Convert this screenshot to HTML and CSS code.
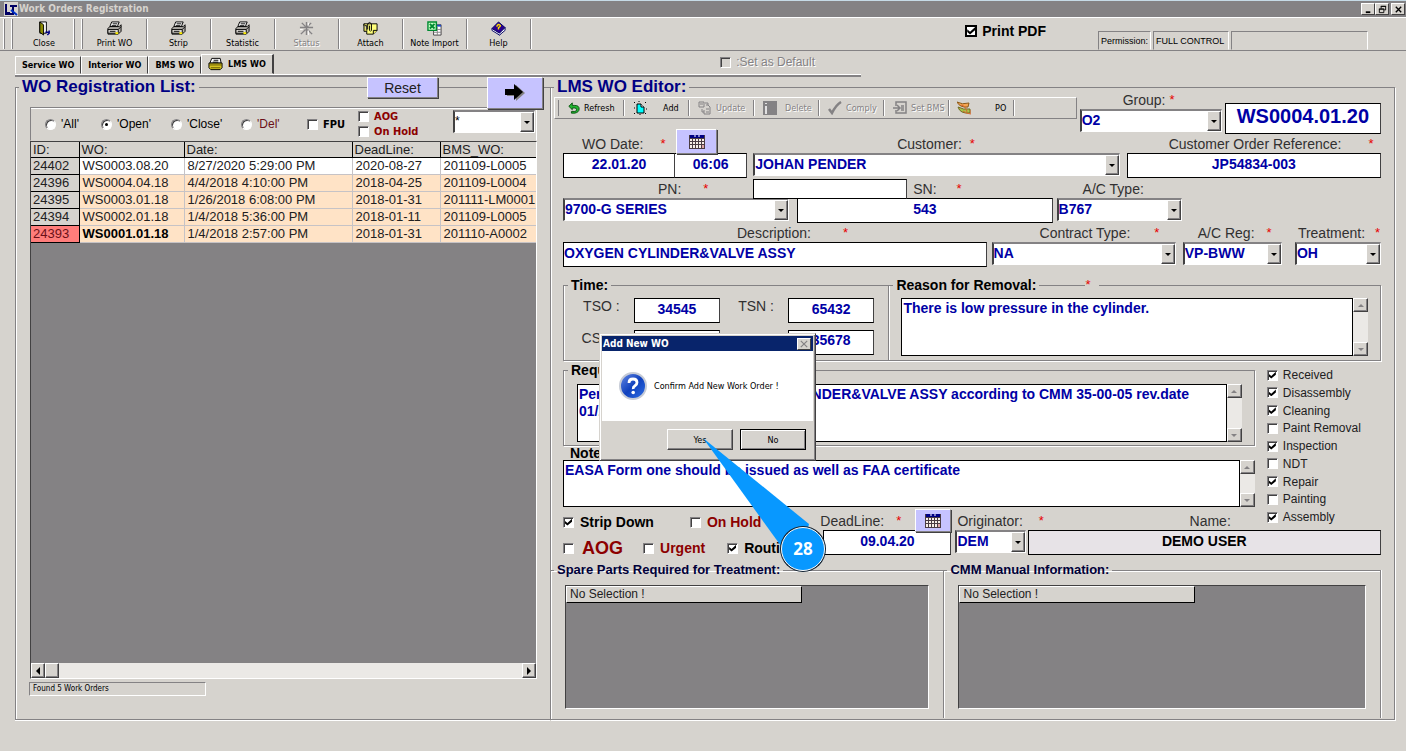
FILE: index.html
```html
<!DOCTYPE html>
<html lang="en">
<head>
<meta charset="utf-8">
<title>Work Orders Registration</title>
<link rel="stylesheet" href="styles.css">
</head>
<body>
<svg width="0" height="0" class="defs" aria-hidden="true">
  <symbol id="printer" viewBox="0 0 16 16"><path d="M5 1h8l-2 5H3z" fill="#fff" stroke="#000"/><path d="M6 3h5M5 5h5" stroke="#000"/><path d="M1 8l2-2h10l2-2v7l-3 3H1z" fill="#b5b2ad" stroke="#000"/><path d="M1 9h11v4H1z" fill="#dedbd6" stroke="#000"/><path d="M3 11h6" stroke="#000"/><path d="M9 12h3v2H9z" fill="#ffef00"/><path d="M12 9l3-3" stroke="#000"/></symbol>
  <symbol id="calendar" viewBox="0 0 16 14"><path d="M0 0h16v14H0z" fill="#4a3c42"/><path d="M1 0h14v3H1z" fill="#000084"/><path d="M5 1h2M9 1h2" stroke="#fff"/><path d="M1 4h2v2H1zM4 4h2v2H4zM7 4h2v2H7zM10 4h2v2h-2zM13 4h2v2h-2zM1 7h2v2H1zM4 7h2v2H4zM7 7h2v2H7zM10 7h2v2h-2zM13 7h2v2h-2zM1 10h2v3H1zM4 10h2v3H4zM7 10h2v3H7zM10 10h2v3h-2z" fill="#f7efe7"/><path d="M13 10h2v3h-2z" fill="#dea5a5"/></symbol>
</svg>

<header class="titlebar">
  <svg class="app-icon" viewBox="0 0 14 14"><path d="M0 0h14v14H0z" fill="#d6d3ce"/><path d="M2 2v9h4M9 3v10M6 4h7M1 12h7" stroke="#000063" stroke-width="2" fill="none"/><path d="M7 8l6 5" stroke="#0030c6" stroke-width="2"/></svg>
  <h1>Work Orders Registration</h1>
  <div class="window-buttons">
    <button aria-label="Minimize"><svg viewBox="0 0 10 10"><path d="M2 8h5" stroke="#000" stroke-width="2"/></svg></button>
    <button aria-label="Restore"><svg viewBox="0 0 10 10"><path d="M3.500 4V1.500h5v4H7M3 1.500h6M1.500 4.500h5v4h-5zM1 4.500h6" fill="none" stroke="#000"/></svg></button>
    <button class="apart" aria-label="Close window"><svg viewBox="0 0 10 10"><path d="M2 2l6 6M8 2L2 8" stroke="#000" stroke-width="1.500"/></svg></button>
  </div>
</header>

<nav class="toolbar">
  <i class="grip"></i><i class="grip"></i>
  <button class="tool close"><svg viewBox="0 0 16 16"><path d="M3 1h7v12H3z" fill="#fff" stroke="#000"/><path d="M3 1l4 3v11l-4-3z" fill="#8c8a00" stroke="#000"/><path d="M9 12h4M13 10v3l-2 2" stroke="#000084" stroke-width="1.500" fill="none"/></svg>Close</button>
  <i class="grip"></i><i class="grip last"></i>
  <button class="tool"><svg><use href="#printer"/></svg>Print WO</button>
  <button class="tool"><svg><use href="#printer"/></svg>Strip</button>
  <button class="tool"><svg><use href="#printer"/></svg>Statistic</button>
  <button class="tool" disabled><svg viewBox="0 0 16 16"><path d="M8 1v14M1 7h14M3 2l4 4M13 2L9 6M2 14l5-5M14 14L9 9" stroke="#848284" stroke-width="1.500" fill="none"/><path d="M10 2v3M4 9H1M10 10v5" stroke="#fff"/></svg>Status</button>
  <button class="tool"><svg viewBox="0 0 16 16"><path d="M1 3h14v7l-4 4H4V5H1z" fill="#ffff7b" stroke="#000"/><path d="M11 14v-4h4M1 3v8h3" fill="#e7e35a" stroke="#000"/><path d="M5 9V3q2-3 4 0v7q-1 2-2 0V5" fill="none" stroke="#000"/></svg>Attach</button>
  <button class="tool"><svg viewBox="0 0 16 16"><path d="M7 4h8v11H7z" fill="#fff" stroke="#424142"/><path d="M7 4h8v2H7z" fill="#2149c6"/><path d="M7 9h8M7 12h8M11 6v9" stroke="#848284"/><path d="M1 1h9v9H1z" fill="#c6ffc6" stroke="#008a31" stroke-width="1.500"/><path d="M3 3l5 5M8 3L3 8" stroke="#008a31" stroke-width="2"/></svg>Note Import</button>
  <button class="tool"><svg viewBox="0 0 16 16"><path d="M1 8l7-7 7 6-6 8z" fill="#29008c" stroke="#000063"/><path d="M15 7v3l-6 5-8-5V8l8 5z" fill="#fff" stroke="#000063"/><path d="M6 6q2-4 4-1 0 1-2 2v2" stroke="#ffde00" stroke-width="1.500" fill="none"/></svg>Help</button>
  <label class="print-pdf"><input type="checkbox" class="check heavy" checked>Print PDF</label>
  <div class="permission"><span>Permission:</span><span>FULL CONTROL</span><span></span></div>
</nav>

<div class="tab-strip">
  <div class="tabs" role="tablist">
    <button role="tab">Service WO</button><button role="tab">Interior WO</button><button role="tab">BMS WO</button><button role="tab" class="active" aria-selected="true"><svg viewBox="0 0 16 14"><path d="M4 1h9l1 5H2z" fill="#fff" stroke="#000"/><path d="M6 3h5M5 5h6" stroke="#000"/><path d="M1 6h14v5l-2 2H3l-2-2z" fill="#d6c321" stroke="#000"/><path d="M1 8h14M3 11h10" stroke="#635900"/></svg>LMS WO</button>
  </div>
  <label class="set-default"><input type="checkbox" class="check" disabled>:Set as Default</label>
</div>

<main class="main">
  <fieldset class="panel list-panel">
    <legend>WO Registration List:</legend>
    <button class="lav reset">Reset</button>
    <button class="lav go" aria-label="Go to editor"><svg viewBox="0 0 22 20"><path d="M3 7h9V2l9 8-9 8v-5H3z" fill="#848284"/><path d="M1 6h9V1l9 8-9 8v-5H1z" fill="#000"/></svg></button>
    <div class="filters">
      <label><input type="radio" name="state" class="radio">'All'</label>
      <label><input type="radio" name="state" class="radio" checked>'Open'</label>
      <label><input type="radio" name="state" class="radio">'Close'</label>
      <label class="maroon"><input type="radio" name="state" class="radio">'Del'</label>
      <label class="strong fpu"><input type="checkbox" class="check">FPU</label>
      <div class="flags">
        <label class="strong red"><input type="checkbox" class="check">AOG</label>
        <label class="strong red"><input type="checkbox" class="check">On Hold</label>
      </div>
      <div class="combo wild"><select aria-label="Mask"><option>*</option></select><i></i></div>
    </div>
    <div class="listing">
      <table>
        <thead><tr><th class="c-id">ID:</th><th class="c-wo">WO:</th><th class="c-date">Date:</th><th class="c-dead">DeadLine:</th><th>BMS_WO:</th></tr></thead>
        <tbody>
          <tr class="plain"><th>24402</th><td>WS0003.08.20</td><td>8/27/2020 5:29:00 PM</td><td>2020-08-27</td><td>201109-L0005</td></tr>
          <tr><th>24396</th><td>WS0004.04.18</td><td>4/4/2018 4:10:00 PM</td><td>2018-04-25</td><td>201109-L0004</td></tr>
          <tr><th>24395</th><td>WS0003.01.18</td><td>1/26/2018 6:08:00 PM</td><td>2018-01-31</td><td>201111-LM0001</td></tr>
          <tr><th>24394</th><td>WS0002.01.18</td><td>1/4/2018 5:36:00 PM</td><td>2018-01-11</td><td>201109-L0005</td></tr>
          <tr class="current"><th>24393</th><td>WS0001.01.18</td><td>1/4/2018 2:57:00 PM</td><td>2018-01-31</td><td>201110-A0002</td></tr>
        </tbody>
      </table>
      <div class="hscroll"><button class="left" aria-label="Scroll left"></button><span class="thumb"></span><button class="right" aria-label="Scroll right"></button></div>
    </div>
    <div class="found">Found 5 Work Orders</div>
  </fieldset>

  <fieldset class="panel editor">
    <legend>LMS WO Editor:</legend>
    <div class="head">
      <div class="actions">
        <button><svg viewBox="0 0 14 14"><path d="M1 5l4-4v3h3q5 0 5 4t-5 5H4v-2h4q2 0 2-2T8 7H5v2z" fill="#21b531" stroke="#004a08"/></svg>Refresh</button>
        <button class="wide"><svg viewBox="0 0 14 14"><path d="M4 3h4l3 3v6H4z" fill="#00ffff" stroke="#000"/><path d="M8 3v3h3" fill="#fff" stroke="#000"/><path d="M1 1l1 1M6 0v1M12 1l1 1M1 7h1M13 8h1M1 13l1-1M13 13l-1-1M7 14v-1" stroke="#000"/></svg>Add</button>
        <button disabled><svg viewBox="0 0 14 14"><path d="M1 1h5v5H1zM8 4h2l2 2v7H6V9" fill="none" stroke="#848284"/><path d="M2 3h3M7 2h3v2M4 8v3h2M8 8h3M8 11h3" stroke="#848284" fill="none"/></svg>Update</button>
        <button disabled class="wide"><svg viewBox="0 0 14 14"><path d="M0 0h14v14H0z" fill="#848284"/><path d="M3 5v8M3 2v1" stroke="#fff" stroke-width="1.500"/></svg>Delete</button>
        <button disabled><svg viewBox="0 0 14 14"><path d="M1 8l3 4Q8 4 13 1" stroke="#848284" stroke-width="2.500" fill="none"/></svg>Comply</button>
        <button disabled><svg viewBox="0 0 14 14"><path d="M3 5V1h10v11H3V9" stroke="#848284" fill="none" stroke-width="1.500"/><path d="M0 7h6M4 4l3 3-3 3M8 5h3M8 7h3M8 9h3" stroke="#848284" stroke-width="1.500" fill="none"/></svg>Set BMS</button>
        <button class="wide"><svg viewBox="0 0 14 14"><path d="M0 1q5 3 12 1l-1 4q-8 1-11-5z" fill="#f7a552" stroke="#8c5918"/><path d="M1 6q5 3 12 2v4Q3 13 1 6z" fill="#a5c34a" stroke="#736921"/><path d="M4 4q5 1 6 7M6 10q4 3 8 3V9" fill="none" stroke="#d66931"/></svg>PO</button>
      </div>
      <div class="field group"><label for="group">Group: <b>*</b></label><div class="combo"><select id="group"><option>O2</option></select><i></i></div></div>
      <input class="box wo-number" value="WS0004.01.20" aria-label="Work order number">
    </div>

    <div class="row r-customer">
      <div class="field date"><label for="wodate">WO Date: <b>*</b></label><input class="box" id="wodate" value="22.01.20"></div>
      <div class="field time"><button class="lav cal" aria-label="Pick date"><svg><use href="#calendar"/></svg></button><input class="box" value="06:06" aria-label="WO time"></div>
      <div class="field customer"><label for="customer">Customer: <b>*</b></label><div class="combo"><select id="customer"><option>JOHAN PENDER</option></select><i></i></div></div>
      <div class="field ref"><label for="ref">Customer Order Reference: <b>*</b></label><input class="box" id="ref" value="JP54834-003"></div>
    </div>

    <div class="row r-part">
      <div class="field pn"><label for="pn">PN: <b>*</b></label><div class="combo"><select id="pn"><option>9700-G SERIES</option></select><i></i></div></div>
      <div class="field sn"><label for="sn">SN: <b>*</b></label><input class="box" id="sn" value="543"><input class="box pn-search" aria-label="PN search"></div>
      <div class="field actype"><label for="actype">A/C Type:</label><div class="combo"><select id="actype"><option>B767</option></select><i></i></div></div>
    </div>

    <div class="row r-desc">
      <div class="field desc"><label for="desc">Description: <b>*</b></label><input class="box left" id="desc" value="OXYGEN CYLINDER&amp;VALVE ASSY"></div>
      <div class="field contract"><label for="contract">Contract Type: <b>*</b></label><div class="combo"><select id="contract"><option>NA</option></select><i></i></div></div>
      <div class="field reg"><label for="reg">A/C Reg: <b>*</b></label><div class="combo"><select id="reg"><option>VP-BWW</option></select><i></i></div></div>
      <div class="field treat"><label for="treat">Treatment: <b>*</b></label><div class="combo"><select id="treat"><option>OH</option></select><i></i></div></div>
    </div>

    <div class="row r-time">
      <fieldset class="sub times">
        <legend>Time:</legend>
        <label for="tso">TSO :</label><input class="box" id="tso" value="34545">
        <label for="tsn">TSN :</label><input class="box" id="tsn" value="65432">
        <label for="cso">CSO :</label><input class="box" id="cso" value="">
        <label for="csn">CSN :</label><input class="box" id="csn" value="35678">
      </fieldset>
      <fieldset class="sub reason">
        <legend>Reason for Removal:</legend><b class="star">*</b>
        <div class="memo"><textarea aria-label="Reason for Removal">There is low pressure in the cylinder.</textarea><div class="vscroll"><button aria-label="Up"></button><button aria-label="Down" class="down"></button></div></div>
      </fieldset>
    </div>

    <div class="row r-work">
      <div class="work">
        <fieldset class="sub required">
          <legend>Required Work:</legend>
          <div class="memo"><textarea aria-label="Required Work">Perform overhaul of OXYGEN CYLINDER&amp;VALVE ASSY according to CMM 35-00-05 rev.date 01/2019</textarea><div class="vscroll"><button aria-label="Up"></button><button aria-label="Down" class="down"></button></div></div>
        </fieldset>
        <label class="notes-label" for="notes">Notes:</label>
        <div class="memo notes"><textarea id="notes">EASA Form one should be issued as well as FAA certificate</textarea><div class="vscroll"><button aria-label="Up"></button><button aria-label="Down" class="down"></button></div></div>
      </div>
      <div class="steps">
        <label><input type="checkbox" class="check" checked>Received</label>
        <label><input type="checkbox" class="check" checked>Disassembly</label>
        <label><input type="checkbox" class="check" checked>Cleaning</label>
        <label><input type="checkbox" class="check">Paint Removal</label>
        <label><input type="checkbox" class="check" checked>Inspection</label>
        <label><input type="checkbox" class="check">NDT</label>
        <label><input type="checkbox" class="check" checked>Repair</label>
        <label><input type="checkbox" class="check">Painting</label>
        <label><input type="checkbox" class="check" checked>Assembly</label>
      </div>
    </div>

    <div class="row r-origin">
      <div class="options">
        <div><label class="strip"><input type="checkbox" class="check" checked>Strip Down</label><label class="red"><input type="checkbox" class="check">On Hold</label></div>
        <div class="second"><label class="red big"><input type="checkbox" class="check">AOG</label><label class="red urgent"><input type="checkbox" class="check">Urgent</label><label><input type="checkbox" class="check" checked>Routine</label></div>
      </div>
      <div class="field deadline"><label for="deadline">DeadLine: <b>*</b></label><button class="lav cal" aria-label="Pick deadline"><svg><use href="#calendar"/></svg></button><input class="box" id="deadline" value="09.04.20"></div>
      <div class="field originator"><label for="originator">Originator: <b>*</b></label><div class="combo"><select id="originator"><option>DEM</option></select><i></i></div></div>
      <div class="field name"><label for="name">Name:</label><input class="box user" id="name" value="DEMO USER" readonly></div>
    </div>

    <div class="bottom">
      <fieldset class="sub lower"><legend>Spare Parts Required for Treatment:</legend><div class="empty-grid"><span>No Selection !</span></div></fieldset>
      <fieldset class="sub lower"><legend>CMM Manual Information:</legend><div class="empty-grid"><span>No Selection !</span></div></fieldset>
    </div>
  </fieldset>
</main>

<section class="dialog" role="dialog" aria-labelledby="dlg-title">
  <div class="dialog-title"><h2 id="dlg-title">Add New WO</h2><button aria-label="Close dialog"><svg viewBox="0 0 10 10"><path d="M1 1l8 8M9 1L1 9" stroke="#848284" stroke-width="1.500"/></svg></button></div>
  <div class="dialog-body">
    <svg viewBox="0 0 28 28"><defs><linearGradient id="q" x1="0" y1="0" x2="1" y2="1"><stop offset="0" stop-color="#6b8ee7"/><stop offset=".5" stop-color="#1041bd"/><stop offset="1" stop-color="#3171e7"/></linearGradient></defs><circle cx="14" cy="14" r="13" fill="url(#q)" stroke="#c6cbd6" stroke-width="2"/><path d="M10 11q0-4 4-4t4 3.500q0 2-2 3.200T14.200 17" fill="none" stroke="#fff" stroke-width="2.800"/><circle cx="14.200" cy="20.500" r="1.800" fill="#fff"/></svg>
    <p>Confirm Add New Work Order !</p>
  </div>
  <div class="dialog-actions"><button>Yes</button><button class="default">No</button></div>
</section>

<aside class="callout">
  <svg viewBox="0 0 126 136"><path d="M2 2L108 88 102 112 80 110z" fill="#0898ff"/></svg>
  <span>28</span>
</aside>
</body>
</html>
```
FILE: styles.css
```css
:root {
  --face: #d6d3ce;
  --shade: #848284;
  --dark: #424142;
  --ink: #0000a5;
  --ui: "DejaVu Sans Condensed", "DejaVu Sans", sans-serif;
  --arial: "Liberation Sans", Arial, sans-serif;
}
* { box-sizing: border-box; }
body {
  margin: 0;
  min-height: 100vh;
  display: flex;
  flex-direction: column;
  position: relative;
  background: var(--face);
  color: #000;
  font: 14px/16px var(--arial);
  border-top: 1px solid #c6dbe7;
}
button, input, select, textarea { font: inherit; color: inherit; margin: 0; border-radius: 0; }
button { padding: 0; border: 0; background: none; }
.defs { position: absolute; }

/* title bar */
.titlebar { display: flex; align-items: center; height: 16px; padding: 0 1px 0 4px; background: var(--shade); }
.titlebar h1 { margin: 0 auto 0 1px; color: var(--face); font: bold 10px/14px var(--ui); }
.app-icon { width: 14px; height: 14px; }
.window-buttons { display: flex; }
.window-buttons button { width: 14px; height: 12px; display: grid; place-items: center; background: var(--face); border: 1px solid; border-color: #fff var(--dark) var(--dark) #fff; }
.window-buttons .apart { margin-left: 2px; }
.window-buttons svg { width: 9px; height: 9px; }

/* main toolbar */
.toolbar { display: flex; align-items: stretch; height: 34px; padding-left: 3px; border-top: 1px solid #fff; border-bottom: 1px solid var(--shade); font: 10px/11px var(--ui); }
.grip { width: 2px; margin: 1px 6px 1px 0; border-left: 1px solid #fff; border-right: 1px solid var(--shade); }
.grip.last { margin-right: 0; }
.tool { width: 64px; display: flex; flex-direction: column; align-items: center; padding-top: 2px; gap: 2px; margin: 1px 0; border-right: 1px solid var(--shade); box-shadow: 1px 0 #fff; font-size: 9px; }
.tool.close { width: 50px; border: 0; box-shadow: none; margin-right: 4px; }
.tool svg { width: 15px; height: 15px; }
.tool:disabled, .actions button:disabled { color: var(--shade); text-shadow: 1px 1px #fff; }
.print-pdf { display: flex; align-items: center; gap: 5px; margin: 0 52px 7px auto; font: bold 14px/16px var(--arial); }
.permission { display: flex; gap: 2px; margin: 13px 38px 0 0; font: 9px/18px var(--arial); }
.permission span { padding: 0 2px; width: 53px; white-space: nowrap; border: 1px solid; border-color: var(--shade) #fff transparent var(--shade); }
.permission span:nth-child(2) { width: 76px; }
.permission span:nth-child(3) { width: 137px; }

/* check boxes and radios */
.check, .radio { appearance: none; flex: none; position: relative; width: 11px; height: 11px; background: #fff; border: 1px solid; border-color: var(--shade) #fff #fff var(--shade); box-shadow: inset 1px 1px var(--dark); }
.check:checked::after { content: ""; position: absolute; inset: 1px; background: #000; clip-path: polygon(0 35%, 35% 65%, 100% 5%, 100% 45%, 35% 100%, 0 70%); }
.check:disabled { background: var(--face); }
.check.heavy { width: 12px; height: 12px; border: 2px solid #000; box-shadow: none; }
.check.heavy::after { inset: 0; }
.radio { border-radius: 50%; }
.radio:checked::after { content: ""; position: absolute; inset: 3px; border-radius: 50%; background: #000; }

/* tabs */
.tab-strip { display: flex; justify-content: space-between; align-items: flex-end; height: 26px; width: 846px; max-width: 100%; border-bottom: 2px solid var(--shade); margin-left: 15px; box-shadow: inset 0 -1px #fff; }
.tabs { display: flex; align-items: flex-end; padding-bottom: 1px; }
.tabs button { height: 18px; padding: 0 6px; display: flex; align-items: center; gap: 5px; background: var(--face); border: 1px solid; border-color: #fff var(--dark) transparent #fff; font: bold 9px/14px var(--ui); }
.tabs .active { height: 20px; border-right-width: 2px; }
.tabs svg { width: 15px; height: 14px; }
.set-default { display: flex; align-items: center; gap: 5px; margin: 0 46px 6px 0; font-size: 12px; line-height: 14px; color: var(--shade); text-shadow: 1px 1px #fff; }

/* panels */
fieldset { margin: 0; min-width: 0; padding: 0; border: 1px solid var(--shade); }
legend { margin: 0; padding: 0 3px; font-weight: bold; }
.main { flex: 1; display: grid; grid-template-columns: 535fr 845fr; margin: 0 11px 31px 15px; }
.panel { position: relative; display: flex; flex-direction: column; box-shadow: inset 1px 0 #fff, 0 1px #fff; }
.panel > legend { margin-left: 0; color: #000084; font-size: 17px; line-height: 20px; }
.list-panel { border-right: 0; padding: 0 13px 0 14px; }
.list-panel > legend { margin-left: -11px; }
.editor { padding: 0 13px 1px 3px; box-shadow: inset 1px 0 #fff, 1px 1px #fff; }
.lav { position: absolute; background: #c6c3ff; border: 1px solid; border-color: #fff var(--shade) var(--shade) #fff; box-shadow: 1px 1px var(--dark); display: grid; place-items: center; }
.reset { right: 112px; top: -20px; width: 71px; height: 21px; font-size: 14px; color: #212021; }
.go { right: 7px; top: -20px; width: 56px; height: 32px; }
.go svg { width: 22px; height: 20px; }

/* list */
.filters { display: flex; align-items: center; margin-top: 10px; height: 34px; padding-left: 14px; border: 1px solid; border-color: var(--shade) #fff transparent var(--shade); box-shadow: inset 0 1px #fff; font-size: 12px; white-space: nowrap; }
.filters label { display: flex; align-items: center; gap: 5px; line-height: 15px; }
.filters > label { width: 70px; }
.filters > label:first-child { width: 56px; }
.filters > label:nth-child(4) { width: 66px; }
.filters .fpu { width: 51px; }
.maroon { color: #6b1018; }
.strong { font: bold 11px/15px var(--ui); }
.red { color: #8c0000; }
.flags { flex: 1; }
.wild { width: 82px; height: 19px; margin: 0 1px 5px 0; font-size: 12px; }
.listing { flex: 1; display: flex; flex-direction: column; background: var(--shade); border: 1px solid; border-color: var(--dark) #fff #fff var(--dark); }
table { width: 100%; border-collapse: collapse; table-layout: fixed; font-size: 13px; line-height: 16px; }
thead { line-height: 15px; }
th, td { padding: 0 0 0 2px; text-align: left; font-weight: normal; white-space: nowrap; overflow: hidden; }
td { background: #ffe3c6; border: 1px solid #c6c3c6; border-width: 0 1px 1px 0; padding-left: 3px; color: #212021; }
th { background: var(--face); border: 1px solid #000; border-width: 0 1px 1px 0; color: #212021; }
tr > :last-child { border-right: 0; }
.plain td { background: #fff; }
.current th { background: #ff7d7b; color: #6b1018; }
.current td:nth-child(2) { font-weight: bold; color: #000; }
.c-id { width: 48px; } .c-wo { width: 105px; } .c-date { width: 168px; } .c-dead { width: 88px; }
.hscroll { display: flex; margin-top: auto; height: 15px; background: #ebe9e6; }
.hscroll button, .thumb, .vscroll button, .combo i { background: var(--face); border: 1px solid; border-color: #fff var(--dark) var(--dark) #fff; box-shadow: inset -1px -1px var(--shade); display: grid; place-items: center; }
.hscroll button, .thumb { width: 14px; }
.hscroll .right { margin-left: auto; }
.hscroll button::before { content: ""; border: 4px solid transparent; border-left: 0; border-right-color: #000; }
.hscroll .right::before { border: 4px solid transparent; border-right: 0; border-left-color: #000; }
.found { width: 177px; height: 14px; margin: 3px 0 23px -1px; padding-left: 3px; border: 1px solid; border-color: var(--shade) #fff #fff var(--shade); font: 8px/11px var(--ui); }

/* fields */
.box { width: 100%; height: 25px; padding: 0 2px 4px; background: #fff; border: 1px solid #000; border-right-color: var(--dark); color: var(--ink); font-weight: bold; text-align: center; }
.box.left { text-align: left; padding-left: 0; }
.combo { position: relative; display: flex; height: 23px; background: #fff; border: 2px solid; border-color: var(--shade) #fff #fff var(--dark); border-bottom-width: 1px; border-right-width: 1px; }
.combo select { appearance: none; width: 100%; padding: 0 16px 2px 0; border: 0; background: none; color: var(--ink); font-weight: bold; }
.combo.wild select { color: #000; font-weight: normal; }
.combo i { position: absolute; right: 0; top: 0; bottom: 0; width: 14px; pointer-events: none; }
.combo i::before, .vscroll button::before { content: ""; border: 3px solid transparent; border-bottom: 0; border-top-color: #000; }
.field { position: relative; min-width: 0; }
.field label { display: flex; gap: 17px; height: 16px; line-height: 15px; color: #313031; white-space: nowrap; }
.field b, .star { color: #e70000; font-weight: normal; font-size: 13px; line-height: 14px; }
.row { display: grid; margin-left: 9px; }

.head { display: grid; grid-template-columns: 522fr 142fr 156fr; column-gap: 3px; }
.actions { display: flex; height: 22px; padding-left: 3px; border: 1px solid; border-color: #fff var(--shade) var(--shade) #fff; font: 9px/12px var(--ui); }
.actions::before { content: ""; width: 1px; margin: 2px 0; background: var(--shade); }
.actions button { width: 65px; margin: 2px 0; padding-left: 9px; display: flex; align-items: center; gap: 4px; border-right: 1px solid var(--shade); box-shadow: 1px 0 #fff; white-space: nowrap; }
.actions .wide { gap: 16px; }
.actions .wide:disabled { gap: 8px; }
.actions svg { width: 14px; height: 14px; flex: none; }
.actions button:nth-child(1) svg { width: 12px; }
.actions .wide:last-child { gap: 24px; padding-left: 8px; }
.group { margin-top: -4px; }
.group label { padding-left: 43px; gap: 4px; }
.wo-number { height: 31px; margin-top: 6px; font-size: 20px; }

.r-customer { grid-template-columns: 112fr 72fr 379fr 254fr; margin-top: 3px; }
.date label { padding-left: 19px; }
.time { padding-top: 16px; }
.time .box { border-left: 0; }
.time .cal { left: 1px; top: -8px; width: 41px; height: 25px; }
.cal svg { width: 16px; height: 14px; }
.customer { padding: 0 7px 0 6px; }
.customer label { padding-left: 144px; gap: 8px; }
.ref label { padding-left: 42px; gap: 27px; }
.r-part { grid-template-columns: 226fr 263fr 129fr 199fr; margin-top: 4px; }
.pn label { padding-left: 95px; gap: 22px; }
.sn { margin-left: 8px; }
.sn label { padding-left: 116px; gap: 20px; }
.pn-search { position: absolute; left: -44px; top: -3px; width: 154px; height: 20px; }
.actype { margin-left: 4px; }
.actype label { padding-left: 26px; }
.r-desc { grid-template-columns: 423fr 189fr 106fr 99fr; margin-top: 3px; }
.desc label { padding-left: 174px; gap: 32px; }
.contract { margin-left: 5px; }
.contract label { padding-left: 48px; gap: 24px; }
.reg { margin-left: 7px; }
.reg label { padding-left: 15px; gap: 12px; }
.treat { margin-left: 13px; }
.treat label { padding-left: 3px; gap: 10px; }

/* groups */
.sub { box-shadow: inset 1px 0 #fff, 1px 1px #fff; }
.sub legend { margin-left: 4px; line-height: 16px; }
.r-time { grid-template-columns: 326fr 491fr; margin-top: 10px; }
.times { display: grid; grid-template-columns: 56fr 87fr 40fr 87fr; column-gap: 14px; row-gap: 6px; padding: 5px 14px 5px 0; }
.times label { text-align: right; color: #313031; }
.reason { position: relative; border-left: 0; padding: 5px 12px 4px 12px; }
.sub.reason legend { margin-left: -8px; }
.star { position: absolute; left: 187px; top: -15px; padding: 0 9px 0 9px; background: linear-gradient(90deg, transparent 40%, var(--face) 40%); }
.memo { display: flex; height: 58px; }
.memo textarea { flex: 1; min-width: 0; resize: none; overflow: hidden; padding: 1px; border: 1px solid #000; outline: 0; background: #fff; color: var(--ink); font-weight: bold; line-height: 17px; }
.vscroll { width: 15px; display: flex; flex-direction: column; justify-content: space-between; background: #ebe9e6; }
.vscroll button { height: 14px; }
.vscroll button::before { border-top-color: var(--shade); }
.vscroll button:first-child::before { border: 3px solid transparent; border-top: 0; border-bottom-color: var(--shade); }
.r-work { grid-template-columns: 691fr 114fr; column-gap: 12px; margin-top: 1px; }
.required { padding: 6px 12px 3px 13px; }
.sub.required legend { margin-left: -9px; }
.notes-label { display: block; font-weight: bold; line-height: 14px; margin-left: 7px; }
.notes { height: 47px; }
.steps { padding-top: 5px; margin-bottom: -18px; display: flex; flex-direction: column; justify-content: space-between; }
.steps label { display: flex; align-items: center; gap: 5px; font-size: 12px; color: #212021; white-space: nowrap; }

.r-origin { grid-template-columns: 260fr 128fr 74fr 355fr; margin-top: 7px; }
.options { font-weight: bold; white-space: nowrap; min-width: 0; }
.options div, .options label { display: flex; align-items: center; gap: 6px; }
.options .strip { margin-right: 30px; }
.options .second { margin-top: 10px; gap: 20px; }
.options .big { font-size: 18px; gap: 8px; }
.options .urgent { margin-right: 2px; }
.deadline label { gap: 12px; margin-left: -3px; }
.deadline .cal { right: 0; top: -5px; width: 36px; height: 23px; }
.originator { margin-left: 4px; }
.originator label { gap: 16px; padding-left: 2px; }
.name { margin-left: 2px; }
.name label { padding-left: 162px; }
.box.user { background: #e7e3e7; color: #000; }

.bottom { flex: 1; display: grid; grid-template-columns: 393fr 436fr; margin: 7px 0 0 -3px; }
.lower { display: flex; flex-direction: column; border-bottom: 0; border-left: 0; padding: 8px 14px 9px 14px; box-shadow: inset 0 1px #fff, 1px 0 #fff; }
.sub.lower legend { color: #000039; font-size: 13px; line-height: 14px; margin-left: -11px; }
.empty-grid { flex: 1; min-height: 60px; background: var(--shade); border: 1px solid; border-color: var(--dark) #fff #fff var(--dark); }
.empty-grid span { display: block; width: 236px; height: 17px; padding-left: 3px; background: var(--face); border: 1px solid; border-color: #fff #000 #000 #fff; font-size: 12px; line-height: 15px; color: #212021; }

/* dialog and step marker */
.dialog { position: absolute; left: 599px; top: 332px; width: 217px; padding: 2px; background: var(--face); border: 1px solid; border-color: var(--face) var(--dark) var(--dark) var(--face); box-shadow: inset 1px 1px #fff, inset -1px -1px var(--shade); font: 10px/14px var(--ui); }
.dialog-title { display: flex; justify-content: space-between; align-items: center; height: 15px; padding: 0 2px 0 1px; background: #08246b; color: #fff; }
.dialog h2 { margin: 0; font: bold 10px/14px var(--ui); }
.dialog-title button { width: 14px; height: 12px; display: grid; place-items: center; background: var(--face); border: 1px solid; border-color: #fff var(--dark) var(--dark) #fff; }
.dialog-title svg { width: 8px; height: 8px; }
.dialog-body { display: flex; align-items: center; gap: 7px; height: 70px; padding-left: 17px; background: #fff; }
.dialog-body svg { width: 28px; height: 28px; }
.dialog-body p { margin: 0; white-space: nowrap; font-size: 9px; }
.dialog-actions { display: flex; justify-content: flex-end; gap: 7px; padding: 8px 7px; font-size: 9px; }
.dialog-actions button { width: 66px; height: 21px; border: 1px solid; border-color: #fff var(--dark) var(--dark) #fff; box-shadow: inset -1px -1px var(--shade); }
.dialog-actions .default { border-color: #000; box-shadow: inset 1px 1px #fff, inset -1px -1px var(--shade); }
.callout { position: absolute; left: 701px; top: 435px; width: 126px; height: 136px; pointer-events: none; }
.callout svg { display: block; }
.callout span { position: absolute; right: 2px; bottom: 1px; width: 44px; height: 44px; border-radius: 50%; background: #0898ff; border: 1px solid #fff; box-shadow: 0 0 0 1px #102030; color: #fff; font: bold 17px/42px "Noto Sans", sans-serif; text-align: center; }
```
